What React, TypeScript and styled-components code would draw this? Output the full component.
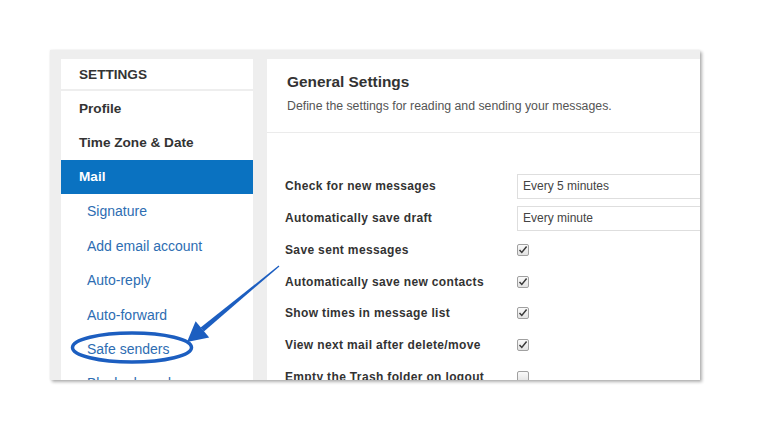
import React from "react";
import styled, { createGlobalStyle } from "styled-components";

const GlobalStyle = createGlobalStyle`
  html, body { margin: 0; padding: 0; background: #ffffff; }
  body { font-family: "Liberation Sans", Arial, sans-serif; }
  * { box-sizing: border-box; }
`;

const Page = styled.div`
  position: relative;
  width: 768px;
  height: 432px;
  padding: 50px 0 0 50px;
  overflow: hidden;
`;

const Frame = styled.div`
  width: 650px;
  height: 330px;
  background: #eeeeee;
  display: flex;
  align-items: flex-start;
  gap: 14px;
  padding: 9px 0 0 11px;
  overflow: hidden;
  box-shadow: 2px 2px 3px rgba(0, 0, 0, 0.3), 0 0 2px rgba(0, 0, 0, 0.08);
`;

const Sidebar = styled.nav`
  width: 192px;
  display: flex;
  flex-direction: column;
  gap: 2px;
  flex-shrink: 0;
`;

const SidebarHeader = styled.div`
  height: 30px;
  flex-shrink: 0;
  background: #ffffff;
  padding-left: 18px;
  display: flex;
  align-items: center;
  font-size: 13.6px;
  font-weight: 700;
  color: #333333;
`;

const NavList = styled.div`
  flex: 1 0 auto;
  background: #ffffff;
  display: flex;
  flex-direction: column;
`;

const NavItem = styled.div<{ $sub?: boolean; $active?: boolean }>`
  height: 34.4px;
  flex-shrink: 0;
  display: flex;
  align-items: center;
  padding-left: ${(p) => (p.$sub ? "26px" : "18px")};
  font-size: ${(p) => (p.$sub ? "14px" : "13.6px")};
  font-weight: ${(p) => (p.$sub ? 400 : 700)};
  color: ${(p) => (p.$active ? "#ffffff" : p.$sub ? "#2d6db2" : "#333333")};
  background: ${(p) => (p.$active ? "#0a72c1" : "transparent")};
`;

const Content = styled.section`
  flex: 1;
  min-height: 340px;
  background: #ffffff;
  display: flex;
  flex-direction: column;
  overflow: hidden;
`;

const ContentHeader = styled.header`
  height: 74px;
  flex-shrink: 0;
  padding: 14px 0 0 20px;
  border-bottom: 1px solid #ebebeb;
`;

const Title = styled.h1`
  margin: 0;
  font-size: 15.4px;
  font-weight: 700;
  color: #333333;
  line-height: 18px;
`;

const Subtitle = styled.p`
  margin: 7px 0 0;
  font-size: 12.3px;
  color: #555555;
  line-height: 16px;
`;

const Body = styled.div`
  padding: 37.6px 0 0 18px;
  display: flex;
  flex-direction: column;
  flex-shrink: 0;
`;

const Row = styled.div`
  height: 31.75px;
  flex-shrink: 0;
  display: grid;
  grid-template-columns: 232px 1fr;
  align-items: center;
`;

const Label = styled.span`
  font-size: 12px;
  font-weight: 700;
  letter-spacing: 0.35px;
  color: #333333;
  white-space: nowrap;
`;

const SelectBox = styled.div`
  height: 25px;
  width: 240px;
  border: 1px solid #dedede;
  padding-left: 5px;
  display: flex;
  align-items: center;
  font-size: 12px;
  color: #444444;
`;

const Check = styled.span`
  width: 12px;
  height: 12px;
  border: 1px solid #a0a0a0;
  border-radius: 2px;
  background: linear-gradient(#fafafa, #e2e2e2);
  display: flex;
  align-items: center;
  justify-content: center;
`;

const Overlay = styled.svg`
  position: absolute;
  left: 0;
  top: 0;
  pointer-events: none;
`;

const CheckBox = ({ checked }: { checked: boolean }) => (
  <Check>
    {checked && (
      <svg width="10" height="10" viewBox="0 0 10 10">
        <path d="M1.5 5 L3.8 7.4 L8.6 1.6" fill="none" stroke="#3a3a3a" strokeWidth="1.5" />
      </svg>
    )}
  </Check>
);

const navItems: { label: string; sub?: boolean; active?: boolean }[] = [
  { label: "Profile" },
  { label: "Time Zone & Date" },
  { label: "Mail", active: true },
  { label: "Signature", sub: true },
  { label: "Add email account", sub: true },
  { label: "Auto-reply", sub: true },
  { label: "Auto-forward", sub: true },
  { label: "Safe senders", sub: true },
  { label: "Blocked senders", sub: true },
];

const checkRows: { label: string; checked: boolean }[] = [
  { label: "Save sent messages", checked: true },
  { label: "Automatically save new contacts", checked: true },
  { label: "Show times in message list", checked: true },
  { label: "View next mail after delete/move", checked: true },
  { label: "Empty the Trash folder on logout", checked: false },
];

export default function App() {
  return (
    <>
      <GlobalStyle />
      <Page>
        <Frame>
          <Sidebar>
            <SidebarHeader>SETTINGS</SidebarHeader>
            <NavList>
              {navItems.map((n) => (
                <NavItem key={n.label} $sub={n.sub} $active={n.active}>
                  {n.label}
                </NavItem>
              ))}
            </NavList>
          </Sidebar>
          <Content>
            <ContentHeader>
              <Title>General Settings</Title>
              <Subtitle>Define the settings for reading and sending your messages.</Subtitle>
            </ContentHeader>
            <Body>
              <Row>
                <Label>Check for new messages</Label>
                <SelectBox>Every 5 minutes</SelectBox>
              </Row>
              <Row>
                <Label>Automatically save draft</Label>
                <SelectBox>Every minute</SelectBox>
              </Row>
              {checkRows.map((r) => (
                <Row key={r.label}>
                  <Label>{r.label}</Label>
                  <CheckBox checked={r.checked} />
                </Row>
              ))}
            </Body>
          </Content>
        </Frame>
        <Overlay width="768" height="432" viewBox="0 0 768 432">
          <ellipse cx="132" cy="347.5" rx="59.5" ry="14.5" fill="none" stroke="#1c5ec0" strokeWidth="3.5" />
          <polygon
            points="279.4,266.4 278.6,265.6 200.6,327.6 203.9,331.4"
            fill="#1c5ec0"
          />
          <polygon points="187,342 195.6,321.2 209.2,337.6" fill="#1c5ec0" />
        </Overlay>
      </Page>
    </>
  );
}
